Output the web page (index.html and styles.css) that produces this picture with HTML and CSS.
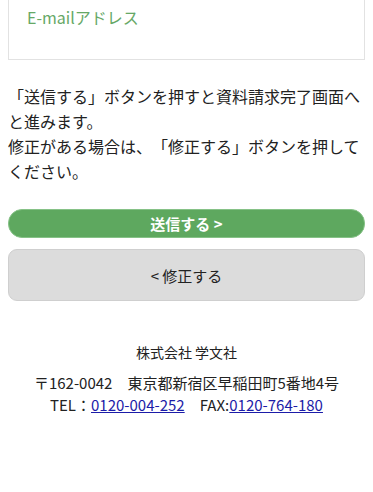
FILE: index.html
```html
<!DOCTYPE html>
<html lang="ja">
<head>
  <meta charset="UTF-8" />
  <meta name="viewport" content="width=device-width, initial-scale=1.0"/>
  <title>資料請求 確認</title>
  <link rel="stylesheet" href="styles.css">
</head>
<body>

  <main class="container">
    <div class="field-box">
      <p class="field-label">E-mailアドレス</p>
    </div>

    <p class="notice">
      「送信する」ボタンを押すと資料請求完了画面へと進みます。<br>
      修正がある場合は、「修正する」ボタンを押してください。
    </p>

    <div class="actions">
      <button class="btn-send">送信する &gt;</button>
      <button class="btn-back">&lt; 修正する</button>
    </div>
  </main>

  <footer class="footer">
    <p class="company">株式会社 学文社</p>
    <p class="address">〒162-0042　東京都新宿区早稲田町5番地4号<br>
      TEL：<a href="#">0120-004-252</a>　FAX:<a href="#">0120-764-180</a></p>
  </footer>

</body>
</html>
```

FILE: styles.css
```css
body {
  font-family: "Noto Sans CJK JP", "Noto Sans", sans-serif;
  margin: 0;
  padding: 0;
  background: #fff;
  color: #222;
  text-spacing-trim: space-all;
}

.container {
  padding: 0 8px;
}

.field-box {
  border: 1px solid #e2e2e2;
  border-top: none;
  padding: 5px 18px 30px;
}

.field-label {
  margin: 0;
  color: #66a866;
  font-size: 16px;
  line-height: 24px;
}

.notice {
  margin: 24px 0 0;
  font-size: 16px;
  line-height: 25px;
}

.actions {
  margin-top: 25px;
  display: flex;
  flex-direction: column;
  gap: 11px;
}

.actions button {
  font-family: inherit;
  font-size: 15px;
  width: 100%;
  cursor: pointer;
}

.btn-send {
  background: #5ea85f;
  color: #fff;
  font-weight: bold;
  border: 1px solid #86c287;
  border-radius: 14px;
  height: 29px;
  padding: 0;
}

.btn-back {
  background: #dcdcdc;
  color: #222;
  border: 1px solid #cfcfcf;
  border-radius: 9px;
  height: 52px;
  padding: 0;
}

.footer {
  text-align: center;
  font-size: 14px;
  padding-top: 40px;
}

.footer p {
  margin: 0;
}

.company {
  line-height: 22px;
}

.address {
  margin-top: 9px !important;
  font-size: 15px;
  line-height: 22px;
}

.address a {
  color: #1c1ca8;
}
```
